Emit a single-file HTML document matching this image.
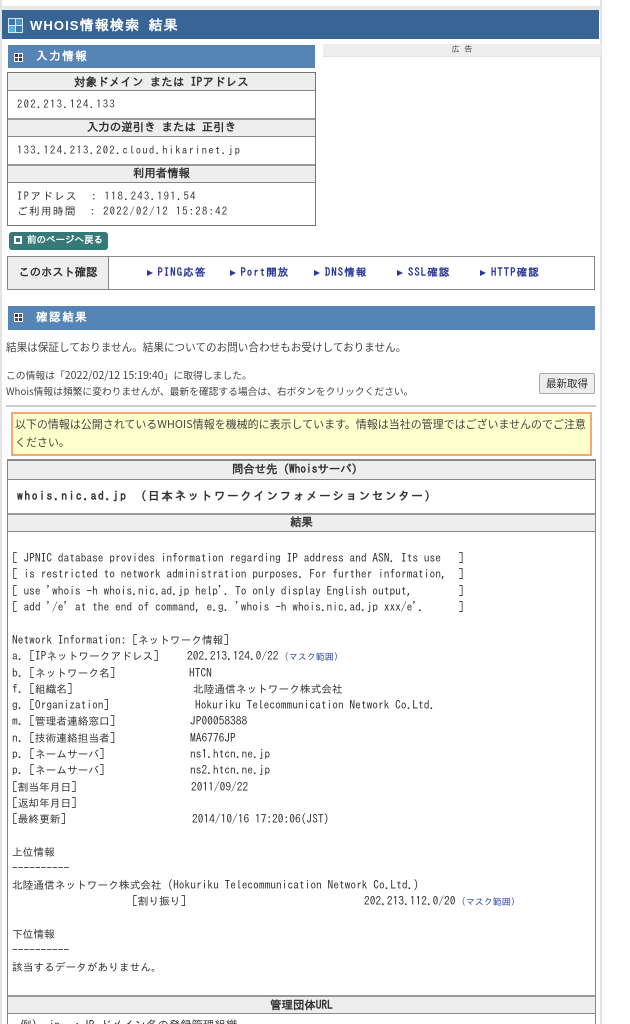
<!DOCTYPE html>
<html lang="ja"><head><meta charset="utf-8"><title>WHOIS情報検索 結果</title>
<style>
html,body{margin:0;padding:0;background:#fff;width:630px;height:1024px;overflow:hidden}
body{position:relative;font-family:"IPAGothic","Liberation Mono","Noto Sans CJK JP",monospace;color:#333}
#w{position:absolute;left:0;top:0;width:630px;height:1024px;overflow:hidden;filter:blur(.3px)}
.a{position:absolute;white-space:pre;margin:0}
.box{position:absolute;box-sizing:border-box;border:1px solid #777;background:#fff}
.th{position:absolute;box-sizing:border-box;background:#eee;text-align:center;font-weight:bold;font-size:11.4px;color:#333;border-top:2px solid #999;border-bottom:1px solid #888;left:0;right:0}
.h{position:absolute;background:#5585b6;left:7.5px;color:#fff;font-weight:bold;font-size:12px;letter-spacing:1.4px}
.m{font-size:11.45px;line-height:16px;color:#333;margin-top:1.5px}
.m b{font-weight:normal;font-size:10.7px}
.s{font-family:"Noto Sans CJK JP","Liberation Sans",sans-serif;font-size:10.6px;color:#444;line-height:14px}
.l{color:#2c3a93;font-weight:bold;font-size:10.5px;letter-spacing:1.15px;top:267px;line-height:12px}
.l i{display:inline-block;width:0;height:0;border-left:6px solid #2c3a93;border-top:3.5px solid transparent;border-bottom:3.5px solid transparent;margin-right:5px}
.v{font-size:10.7px;letter-spacing:1.25px;color:#333;line-height:14px}
.k{color:#2b4a9a;font-size:9px}
</style></head><body><div id="w">
<div class="a" style="left:0;top:6px;width:600px;height:4px;background:#e8e8e8"></div>
<div class="a" style="left:600px;top:0;width:2px;height:1024px;background:#e4e4e4"></div>
<div class="a" style="left:0;top:0;width:2px;height:1024px;background:#e4e4e4"></div>
<div class="a" style="left:2px;top:10px;width:597px;height:29px;background:#386496"></div>

<svg class="a" style="left:8px;top:18px" width="15" height="15" viewBox="0 0 15 15"><rect x=".5" y=".5" width="14" height="14" fill="#3d79ad" stroke="#cfe6f5"/><rect x="1" y="8" width="6" height="6" fill="#5ab0e2"/><rect x="8" y="1" width="6" height="6" fill="#4a94cc"/><path d="M7.5 0V15M0 7.5H15" stroke="#dcecf7"/></svg>
<div class="a" style="left:30px;top:17px;color:#fff;font-weight:bold;font-size:14px;letter-spacing:1.2px;line-height:17px"><span style="font-family:'Liberation Sans',sans-serif;font-size:13px;letter-spacing:1.1px">WHOIS</span>情報検索 結果</div>

<div class="h" style="top:45px;width:307.5px;height:23px"></div>
<svg class="a" style="left:14px;top:53px" width="9" height="9"><rect width="9" height="9" fill="#fff"/><rect x="1" y="1" width="3" height="3" fill="#333"/><rect x="5" y="5" width="3" height="3" fill="#333"/><rect x="5" y="1" width="3" height="3" fill="#555"/><rect x="1" y="5" width="3" height="3" fill="#555"/></svg>
<div class="a" style="left:36px;top:50px;color:#fff;font-weight:bold;font-size:11.5px;letter-spacing:1.6px;line-height:14px">入力情報</div>

<div class="a" style="left:323px;top:44px;width:278px;height:12px;background:#eee;border-bottom:1px solid #e2e2e2;text-align:center;font-size:8.5px;line-height:12px;color:#555">広 告</div>

<div class="box" style="left:7px;top:72px;width:309px;height:154px">
 <div class="th" style="top:0;height:18px;border-top:0;line-height:19px;letter-spacing:.25px">対象ドメイン または IPアドレス</div>
 <div class="th" style="top:45px;height:19px;line-height:16px;letter-spacing:.1px">入力の逆引き または 正引き</div>
 <div class="th" style="top:91px;height:19px;line-height:16px">利用者情報</div>
</div>
<div class="a v" style="left:17px;top:98px">202.213.124.133</div>
<div class="a v" style="left:17px;top:144px">133.124.213.202.cloud.hikarinet.jp</div>
<div class="a v" style="left:17px;top:190px">IPアドレス  : 118.243.191.54</div>
<div class="a v" style="left:17px;top:205px">ご利用時間  : 2022/02/12 15:28:42</div>

<div class="a" style="left:9px;top:232px;width:99px;height:18px;background:#367a78;border-radius:3px;color:#fff;font-weight:bold;font-size:9.5px;line-height:18px"><span style="display:inline-block;width:4px;height:4px;border:2px solid #fff;margin:0 5px 0 5px;vertical-align:-1px"></span>前のページへ戻る</div>

<div class="box" style="left:7px;top:256px;width:588px;height:34px;border-color:#888"></div>
<div class="a" style="left:8px;top:257px;width:100px;height:32px;background:#eee;border-right:1px solid #888;color:#333;font-weight:bold;font-size:11.2px;letter-spacing:.1px;line-height:32px;text-align:center">このホスト確認</div>
<div class="a l" style="left:146.5px"><i></i>PING応答</div>
<div class="a l" style="left:229.5px"><i></i>Port開放</div>
<div class="a l" style="left:314px"><i></i>DNS情報</div>
<div class="a l" style="left:397px"><i></i>SSL確認</div>
<div class="a l" style="left:480px"><i></i>HTTP確認</div>

<div class="h" style="top:306px;width:587.5px;height:24px"></div>
<svg class="a" style="left:14px;top:313px" width="9" height="9"><rect width="9" height="9" fill="#fff"/><rect x="1" y="1" width="3" height="3" fill="#333"/><rect x="5" y="5" width="3" height="3" fill="#333"/><rect x="5" y="1" width="3" height="3" fill="#555"/><rect x="1" y="5" width="3" height="3" fill="#555"/></svg>
<div class="a" style="left:36px;top:311px;color:#fff;font-weight:bold;font-size:11.5px;letter-spacing:1.6px;line-height:14px">確認結果</div>

<div class="a s" style="left:6px;top:341px">結果は保証しておりません。結果についてのお問い合わせもお受けしておりません。</div>
<div class="a s" style="left:6px;top:368px;font-size:9.8px">この情報は「<span style="font-size:10.6px">2022/02/12 15:19:40</span>」に取得しました。</div>
<div class="a s" style="left:6px;top:384px;font-size:9.75px">Whois情報は頻繁に変わりませんが、最新を確認する場合は、右ボタンをクリックください。</div>
<div class="a" style="left:539px;top:373px;width:54px;height:19px;background:#eee;border:1px solid #aaa;border-radius:2px;text-align:center;font-family:'Noto Sans CJK JP',sans-serif;font-size:10.5px;line-height:19px;color:#333">最新取得</div>
<div class="a" style="left:6px;top:405px;width:590px;height:2px;background:#ccc"></div>

<div class="a" style="left:11px;top:412px;width:577px;height:40px;background:#ffffcc;border:2px solid #f5a873"></div>
<div class="a s" style="left:15px;top:416px;line-height:17px;font-size:10.98px">以下の情報は公開されているWHOIS情報を機械的に表示しています。情報は当社の管理ではございませんのでご注意</div>
<div class="a s" style="left:15px;top:434px;line-height:17px;font-size:10.98px">ください。</div>

<div class="box" style="left:7px;top:459px;width:589px;height:570px;border-color:#888;border-width:2px 1px 1px 1px">
 <div class="th" style="top:0;height:19px;border-top:0;line-height:17px;padding-right:8px">問合せ先（Whoisサーバ）</div>
 <div class="th" style="top:52px;height:19px;line-height:16px">結果</div>
 <div class="th" style="top:534px;height:19px;line-height:18px">管理団体URL</div>
</div>
<div class="a" style="left:17px;top:490px;font-weight:bold;font-size:11.6px;letter-spacing:1.57px;line-height:14px;color:#333">whois.nic.ad.jp （日本ネットワークインフォメーションセンター）</div>

<div class="a m" style="left:12px;top:549px">[ JPNIC database provides information regarding IP address and ASN. Its use   ]</div>
<div class="a m" style="left:12px;top:565px">[ is restricted to network administration purposes. For further information,  ]</div>
<div class="a m" style="left:12px;top:582px">[ use 'whois -h whois.nic.ad.jp help'. To only display English output,        ]</div>
<div class="a m" style="left:12px;top:598px">[ add '/e' at the end of command, e.g. 'whois -h whois.nic.ad.jp xxx/e'.      ]</div>
<div class="a m" style="left:12px;top:631px">Network Information: [<b>ネットワーク情報</b>]</div>
<div class="a m" style="left:12px;top:647px">a. [IP<b>ネットワークアドレス</b>]</div><div class="a m" style="left:187px;top:647px">202.213.124.0/22 <span class="k">(マスク範囲)</span></div>
<div class="a m" style="left:12px;top:664px">b. [<b>ネットワーク名</b>]</div><div class="a m" style="left:189px;top:664px">HTCN</div>
<div class="a m" style="left:12px;top:680px">f. [<b>組織名</b>]</div><div class="a m" style="left:193px;top:680px"><b>北陸通信ネットワーク株式会社</b></div>
<div class="a m" style="left:12px;top:696px">g. [Organization]</div><div class="a m" style="left:195px;top:696px">Hokuriku Telecommunication Network Co.Ltd.</div>
<div class="a m" style="left:12px;top:712px">m. [<b>管理者連絡窓口</b>]</div><div class="a m" style="left:190px;top:712px">JP00058388</div>
<div class="a m" style="left:12px;top:729px">n. [<b>技術連絡担当者</b>]</div><div class="a m" style="left:190px;top:729px">MA6776JP</div>
<div class="a m" style="left:12px;top:745px">p. [<b>ネームサーバ</b>]</div><div class="a m" style="left:190px;top:745px">ns1.htcn.ne.jp</div>
<div class="a m" style="left:12px;top:761px">p. [<b>ネームサーバ</b>]</div><div class="a m" style="left:190px;top:761px">ns2.htcn.ne.jp</div>
<div class="a m" style="left:12px;top:778px">[<b>割当年月日</b>]</div><div class="a m" style="left:191px;top:778px">2011/09/22</div>
<div class="a m" style="left:12px;top:794px">[<b>返却年月日</b>]</div>
<div class="a m" style="left:12px;top:810px">[<b>最終更新</b>]</div><div class="a m" style="left:192px;top:810px">2014/10/16 17:20:06(JST)</div>
<div class="a m" style="left:12px;top:843px"><b>上位情報</b></div>
<div class="a m" style="left:12px;top:859px">----------</div>
<div class="a m" style="left:12px;top:876px"><b>北陸通信ネットワーク株式会社</b> (Hokuriku Telecommunication Network Co.Ltd.)</div>
<div class="a m" style="left:132px;top:892px">[<b>割り振り</b>]</div><div class="a m" style="left:364px;top:892px">202.213.112.0/20 <span class="k">(マスク範囲)</span></div>
<div class="a m" style="left:12px;top:925px"><b>下位情報</b></div>
<div class="a m" style="left:12px;top:941px">----------</div>
<div class="a m" style="left:12px;top:958px"><b>該当するデータがありません。</b></div>
<div class="a m" style="left:20px;top:1016px">例) .jp  ：JP ドメイン名の登録管理組織</div>
</div></body></html>
